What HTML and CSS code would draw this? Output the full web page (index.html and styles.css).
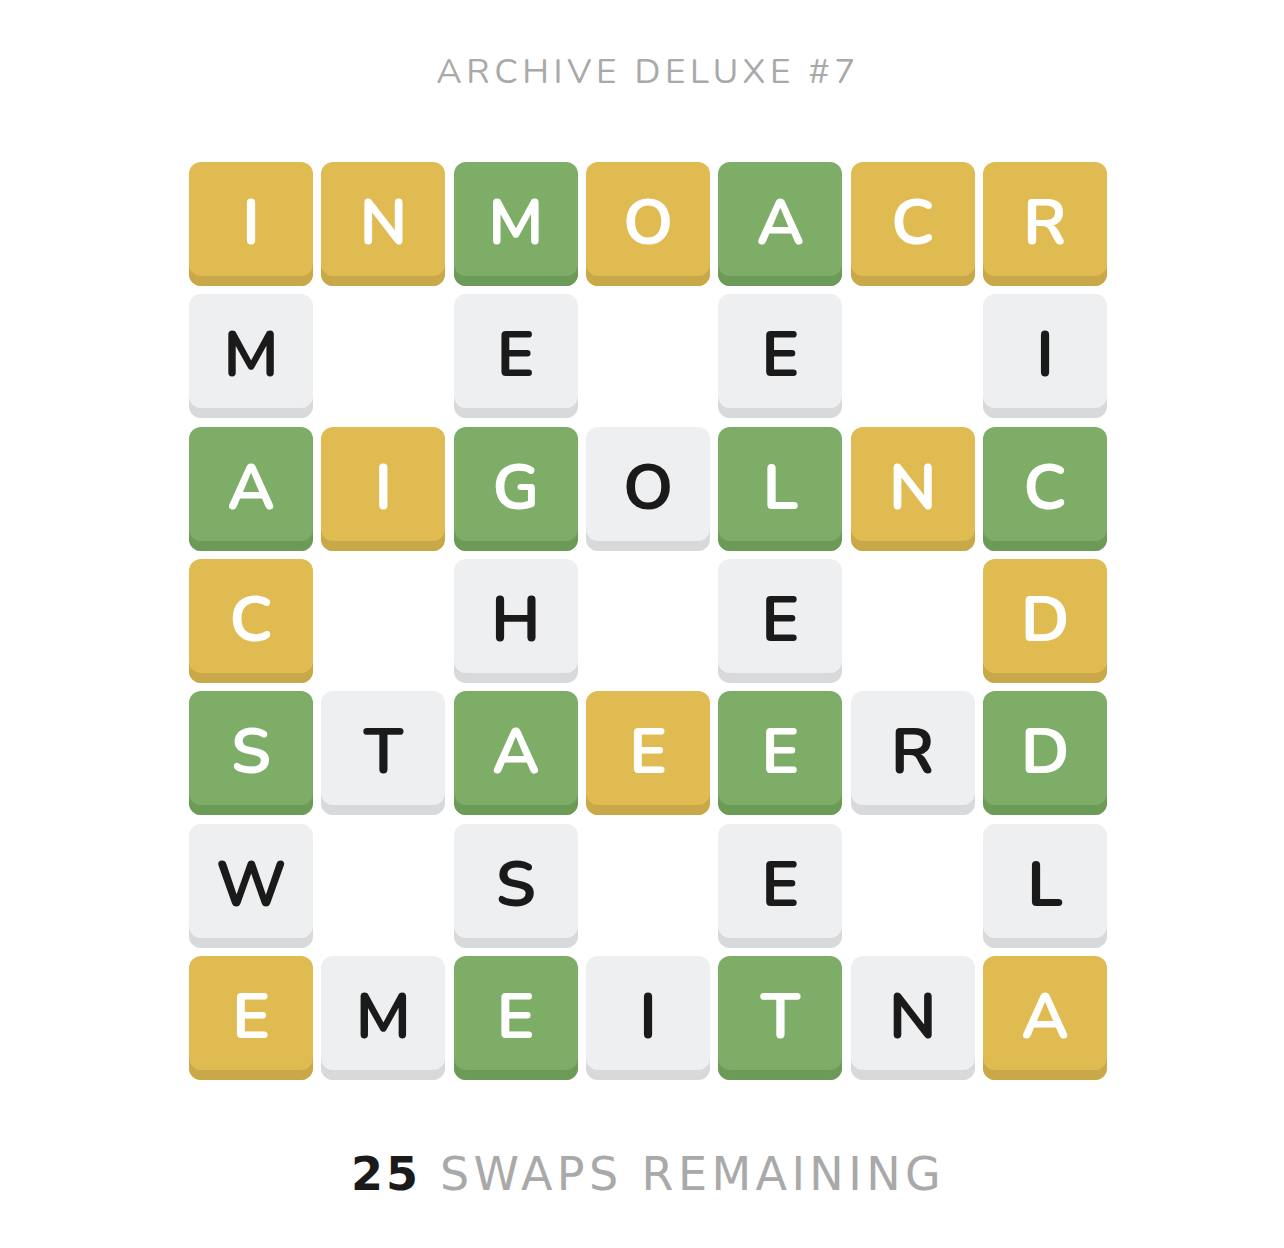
FILE: index.html
```html
<!DOCTYPE html>
<html>
<head>
<meta charset="utf-8">
<link rel="stylesheet" href="styles.css">
</head>
<body>
<main class="page">
  <h1 class="title">ARCHIVE DELUXE #7</h1>
  <div class="board">
    <div class="tile y">I</div><div class="tile y">N</div><div class="tile g">M</div><div class="tile y">O</div><div class="tile g">A</div><div class="tile y">C</div><div class="tile y">R</div>
    <div class="tile w">M</div><div class="blank"></div><div class="tile w">E</div><div class="blank"></div><div class="tile w">E</div><div class="blank"></div><div class="tile w">I</div>
    <div class="tile g">A</div><div class="tile y">I</div><div class="tile g">G</div><div class="tile w">O</div><div class="tile g">L</div><div class="tile y">N</div><div class="tile g">C</div>
    <div class="tile y">C</div><div class="blank"></div><div class="tile w">H</div><div class="blank"></div><div class="tile w">E</div><div class="blank"></div><div class="tile y">D</div>
    <div class="tile g">S</div><div class="tile w">T</div><div class="tile g">A</div><div class="tile y">E</div><div class="tile g">E</div><div class="tile w">R</div><div class="tile g">D</div>
    <div class="tile w">W</div><div class="blank"></div><div class="tile w">S</div><div class="blank"></div><div class="tile w">E</div><div class="blank"></div><div class="tile w">L</div>
    <div class="tile y">E</div><div class="tile w">M</div><div class="tile g">E</div><div class="tile w">I</div><div class="tile g">T</div><div class="tile w">N</div><div class="tile y">A</div>
  </div>
  <p class="status"><span class="count">25</span> SWAPS REMAINING</p>
</main>
</body>
</html>
```
FILE: styles.css
```css
html, body {
  margin: 0;
  padding: 0;
  background: #ffffff;
}
.page {
  display: flex;
  flex-direction: column;
  align-items: center;
  padding-left: 12px;
  padding-top: 50px;
  font-family: "Nunito", "Lato", "Open Sans", sans-serif;
}
.title {
  margin: 0;
  font-size: 35px;
  line-height: 44px;
  font-weight: 400;
  letter-spacing: 4.6px;
  color: #a9a9a9;
}
.board {
  margin-top: 68px;
  width: 918px;
  display: grid;
  grid-template-columns: repeat(7, 1fr);
  gap: 8.33px;
}
.tile {
  aspect-ratio: 1;
  border-radius: 12px;
  display: flex;
  align-items: center;
  justify-content: center;
  box-sizing: border-box;
  padding-bottom: 2px;
  font-size: 64px;
  font-weight: 700;
}
.y {
  background: #e0bb52;
  box-shadow: inset 0 -10px 0 #c9a84a;
  color: #ffffff;
}
.g {
  background: #7dad66;
  box-shadow: inset 0 -10px 0 #6c9a57;
  color: #ffffff;
}
.w {
  background: #eeeff1;
  box-shadow: inset 0 -10px 0 #d8d9db;
  color: #1a1a1a;
}
.status {
  margin: 64px 0 0;
  font-family: "DejaVu Sans", "Open Sans", sans-serif;
  font-size: 46px;
  line-height: 60px;
  letter-spacing: 4.4px;
  color: #a9a9a9;
  font-weight: 400;
}
.count {
  color: #1a1a1a;
  font-weight: 700;
  letter-spacing: 3px;
}
```
